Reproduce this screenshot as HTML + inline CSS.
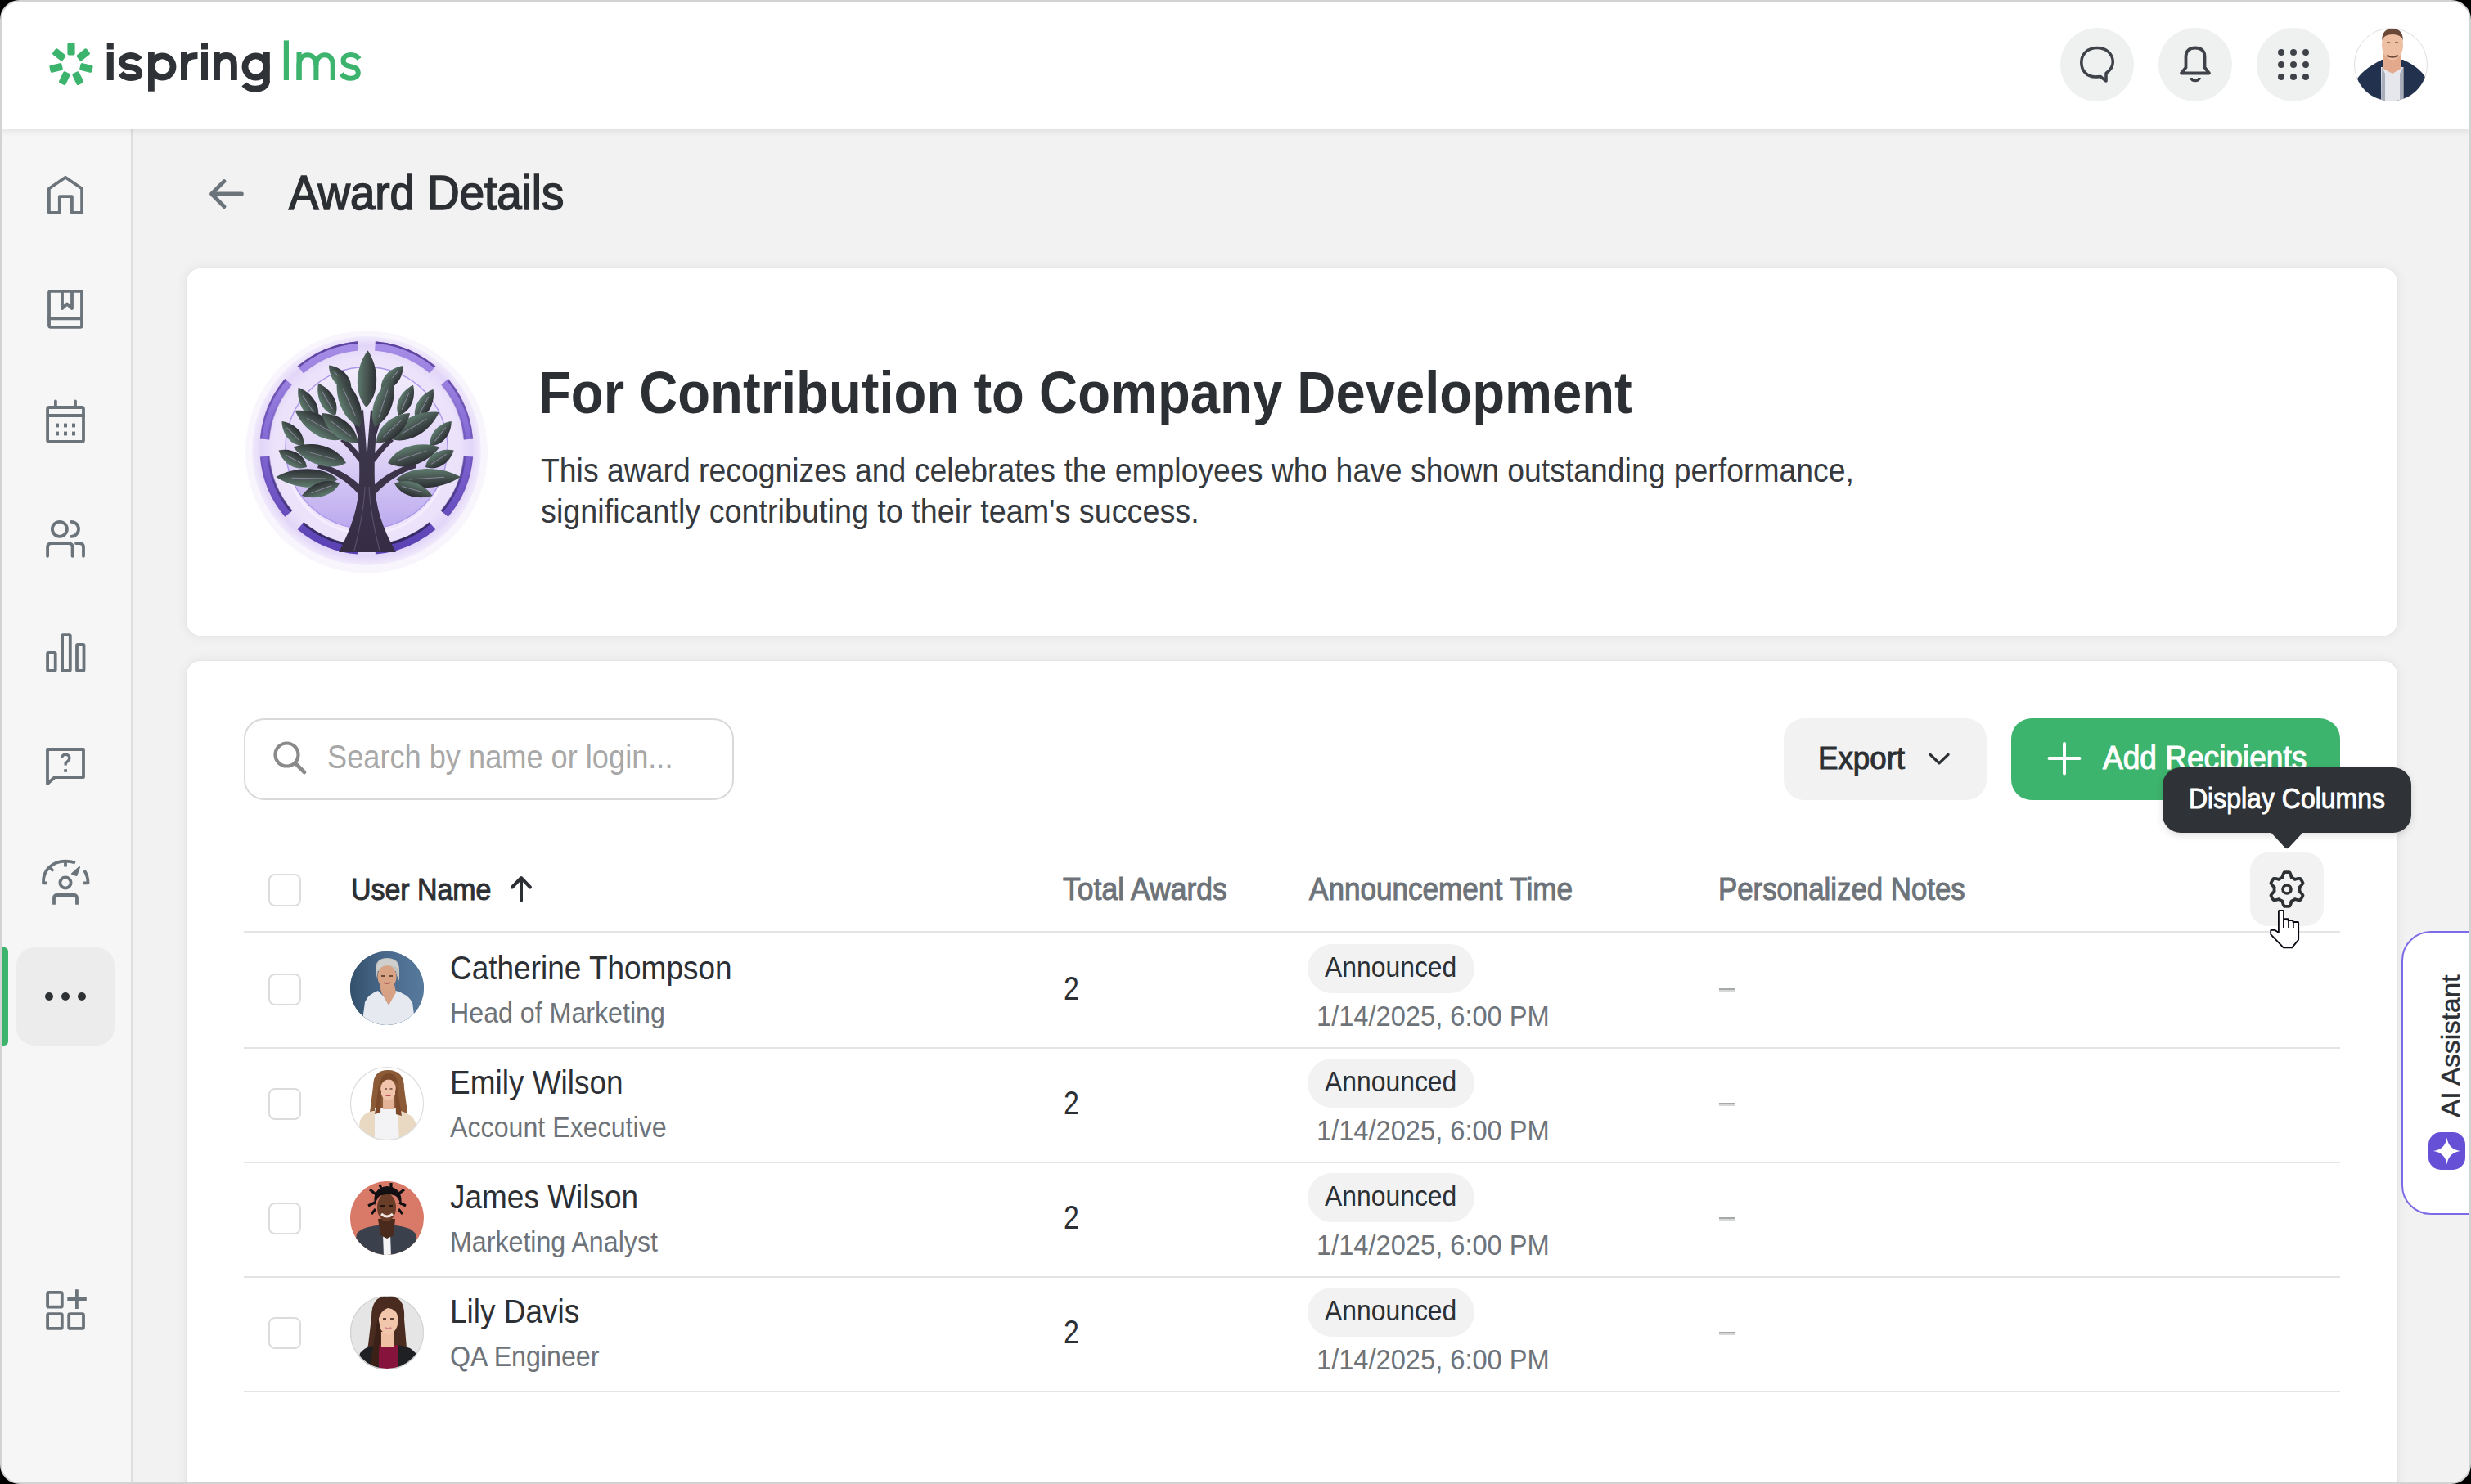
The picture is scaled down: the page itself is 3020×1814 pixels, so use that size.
<!DOCTYPE html><html><head><meta charset="utf-8"><style>
*{margin:0;padding:0;box-sizing:border-box}
html,body{width:3020px;height:1814px;background:#000;overflow:hidden}
body{font-family:"Liberation Sans",sans-serif;position:relative}
.frame{position:absolute;left:0;top:0;width:3020px;height:1814px;border:2px solid #d3d3d3;border-radius:24px;overflow:hidden;background:#f2f2f2}
.w{position:absolute;left:-2px;top:-2px;width:3020px;height:1814px}
.abs{position:absolute}
.t{position:absolute;white-space:nowrap;line-height:1.1172}
svg{position:absolute;overflow:visible}
</style></head><body><div class="frame"><div class="w">
<div class="abs" style="left:0;top:0;width:3020px;height:158px;background:#fff;box-shadow:0 2px 9px rgba(0,0,0,0.09);z-index:2"></div>
<div class="abs" style="left:0;top:0;width:3020px;height:158px;z-index:3">
<svg style="left:0;top:0" width="1" height="1"><g transform="translate(87,78.7)"><rect x="-4.6" y="-26.65" width="9.2" height="15.5" rx="2" transform="rotate(0.00)" fill="#3db46d"/><rect x="-4.6" y="-26.65" width="9.2" height="15.5" rx="2" transform="rotate(51.43)" fill="#3db46d"/><rect x="-4.6" y="-26.65" width="9.2" height="15.5" rx="2" transform="rotate(102.86)" fill="#3db46d"/><rect x="-4.6" y="-26.65" width="9.2" height="15.5" rx="2" transform="rotate(154.29)" fill="#3db46d"/><rect x="-4.6" y="-26.65" width="9.2" height="15.5" rx="2" transform="rotate(205.71)" fill="#3db46d"/><rect x="-4.6" y="-26.65" width="9.2" height="15.5" rx="2" transform="rotate(257.14)" fill="#3db46d"/><rect x="-4.6" y="-26.65" width="9.2" height="15.5" rx="2" transform="rotate(308.57)" fill="#3db46d"/></g></svg>
<svg style="left:0;top:0" width="1" height="1">
<g fill="#2f3236">
<rect x="130.7" y="64" width="8.1" height="34"/><rect x="130.7" y="52.7" width="8.1" height="7.8"/>
<rect x="181" y="64" width="7.8" height="47.7"/>
<rect x="221" y="64" width="8" height="34"/>
<rect x="246" y="64" width="8" height="34"/><rect x="246" y="52.7" width="8" height="7.8"/>
<rect x="261" y="64" width="7.8" height="34"/>
<rect x="321.8" y="64" width="8" height="38"/>
</g>
<g fill="none" stroke="#2f3236" stroke-width="7.8">
<path d="M170.5 73 C168 69.5 164 68 159.5 68 C153.5 68 149.2 70.8 149.2 75.5 C149.2 80 153 81.3 159.5 82.2 C166 83 170.2 85 170.2 89.8 C170.2 93.5 166 95 159.5 95 C154.5 95 150.5 93 147.8 89.5"/>
<circle cx="198.4" cy="81.4" r="13.1"/>
<path d="M225 82 C225 73 230 68 241.5 68"/>
<path d="M264.9 98 V81 C264.9 73 269.5 68 276.5 68 C283 68 285.9 72 285.9 80 V98"/>
<circle cx="312.6" cy="81.4" r="13.1"/>
<path d="M325.8 99 C325.8 105.5 320.5 108.6 312.3 108.6 C306 108.6 301.5 106.8 298.5 102.8"/>
</g>
<g fill="#3db46d"><rect x="346.8" y="49.4" width="6.2" height="48.6"/><rect x="362.5" y="64" width="6.1" height="34"/></g>
<g fill="none" stroke="#3db46d" stroke-width="6.1">
<path d="M365.5 98 V80 C365.5 72.5 369.5 67.2 376 67.2 C382.5 67.2 386.4 72 386.4 80 V98"/>
<path d="M386.4 80 C386.4 72.5 390.5 67.2 397 67.2 C403.5 67.2 406.8 72 406.8 80 V98"/>
<path d="M439 72 C436.5 68.5 433 67 428.5 67 C423 67 419.5 69.7 419.5 74.5 C419.5 79 423.5 80.3 428.8 81.2 C434.5 82 437.8 84 437.8 89 C437.8 93.5 434 95.8 428.5 95.8 C424 95.8 420 94 417.3 90"/>
</g></svg>
<div class="abs" style="left:2518px;top:34px;width:90px;height:90px;border-radius:50%;background:#eff1f1"></div>
<div class="abs" style="left:2638px;top:34px;width:90px;height:90px;border-radius:50%;background:#eff1f1"></div>
<div class="abs" style="left:2758px;top:34px;width:90px;height:90px;border-radius:50%;background:#eff1f1"></div>
<svg style="left:2523px;top:39px" width="80" height="80" viewBox="0 0 80 80"><path d="M44 54.5 C41.5 54.8 39.5 55 38 55 C27 55 20.8 47 20.8 37.5 C20.8 27 28.5 19.5 40 19.5 C51.5 19.5 59.3 27 59.3 37 C59.3 42.5 56 47 51 50.5 L51 60 Z" fill="none" stroke="#3f4349" stroke-width="3.6" stroke-linejoin="round"/></svg>
<svg style="left:2643px;top:39px" width="80" height="80" viewBox="0 0 80 80"><path d="M23 50.5 L28.5 43.5 V30 C28.5 23 33 19.5 40 19.5 C47 19.5 51.5 23 51.5 30 V43.5 L57 50.5 Z" fill="none" stroke="#3f4349" stroke-width="3.8" stroke-linejoin="round"/><path d="M35 56 C35 60.5 45 60.5 45 56" fill="none" stroke="#3f4349" stroke-width="3.8"/></svg>
<svg style="left:2763px;top:39px" width="80" height="80" viewBox="0 0 80 80"><rect x="21" y="21" width="8" height="8" rx="4" fill="#3f4349"/><rect x="36" y="21" width="8" height="8" rx="4" fill="#3f4349"/><rect x="51" y="21" width="8" height="8" rx="4" fill="#3f4349"/><rect x="21" y="36" width="8" height="8" rx="4" fill="#3f4349"/><rect x="36" y="36" width="8" height="8" rx="4" fill="#3f4349"/><rect x="51" y="36" width="8" height="8" rx="4" fill="#3f4349"/><rect x="21" y="51" width="8" height="8" rx="4" fill="#3f4349"/><rect x="36" y="51" width="8" height="8" rx="4" fill="#3f4349"/><rect x="51" y="51" width="8" height="8" rx="4" fill="#3f4349"/></svg>
<svg style="left:2877px;top:34px" width="90" height="90" viewBox="0 0 90 90">
<defs><clipPath id="cav"><circle cx="45" cy="45" r="44.5"/></clipPath></defs>
<circle cx="45" cy="45" r="44.5" fill="#fff" stroke="#dedede" stroke-width="1"/>
<g clip-path="url(#cav)">
<path d="M2 66 Q8 52 34 39 L60 39 Q84 50 90 66 L90 95 L2 95 Z" fill="#22314d"/>
<rect x="33" y="48" width="27.5" height="50" fill="#e6e7ec"/>
<path d="M34 48 L38 56 L38 95 L33 95 Z M60 48 L56 56 L56 95 L60.5 95 Z" fill="#7e8899" opacity="0.6"/>
<path d="M36 30 L57 30 L57 50 L47 56 L36 50 Z" fill="#e3a98d"/>
<ellipse cx="47" cy="21" rx="13" ry="18.5" fill="#efbfa3"/>
<path d="M34 16 Q34 1 47 1 Q60 1 60 16 Q58 8 47 8 Q36 8 34 16 Z" fill="#6a4736"/>
<path d="M40 34 Q47 37 54 34" stroke="#6f4a3a" stroke-width="2.4" fill="none"/>
<path d="M40 18 H44 M50 18 H54" stroke="#7a5a50" stroke-width="1.6"/>
</g></svg>
</div>
<div class="abs" style="left:0;top:158px;width:162px;height:1656px;background:#f6f6f6;border-right:2px solid #dedede;z-index:1"></div>
<svg style="left:40px;top:200px;z-index:2" width="80" height="80" viewBox="0 0 80 80"><path d="M19.9 59.8 V30.5 L40 16.8 L60.1 30.5 V59.8 H47.9 V40.2 H32.8 V59.8 Z" fill="none" stroke="#6b737b" stroke-width="3.8" stroke-linejoin="round" stroke-linecap="round"/></svg>
<svg style="left:40px;top:337px;z-index:2" width="80" height="80" viewBox="0 0 80 80"><rect x="20" y="18.8" width="40" height="44" rx="2" fill="none" stroke="#6b737b" stroke-width="3.8" stroke-linejoin="round" stroke-linecap="round"/><path d="M20 52.4 H60" fill="none" stroke="#6b737b" stroke-width="3.8" stroke-linejoin="round" stroke-linecap="round"/><path d="M36 18.8 V40 L42 34.5 L48 40 V18.8" fill="none" stroke="#6b737b" stroke-width="3.8" stroke-linejoin="round" stroke-linecap="round"/></svg>
<svg style="left:40px;top:476px;z-index:2" width="80" height="80" viewBox="0 0 80 80"><rect x="18.1" y="22" width="43.9" height="42" rx="2" fill="none" stroke="#6b737b" stroke-width="3.8" stroke-linejoin="round" stroke-linecap="round"/><path d="M18.1 32 H62 M27.9 14.3 V22 M52 14.3 V22" fill="none" stroke="#6b737b" stroke-width="3.8" stroke-linejoin="round" stroke-linecap="round"/><rect x="28" y="41.6" width="4" height="4.8" fill="#6b737b"/><rect x="38" y="41.6" width="4" height="4.8" fill="#6b737b"/><rect x="48" y="41.6" width="4" height="4.8" fill="#6b737b"/><rect x="28" y="51.6" width="4" height="4.8" fill="#6b737b"/><rect x="38" y="51.6" width="4" height="4.8" fill="#6b737b"/><rect x="48" y="51.6" width="4" height="4.8" fill="#6b737b"/></svg>
<svg style="left:40px;top:617px;z-index:2" width="80" height="80" viewBox="0 0 80 80"><circle cx="32.9" cy="29.8" r="9" fill="none" stroke="#6b737b" stroke-width="3.8" stroke-linejoin="round" stroke-linecap="round"/><path d="M47 20.8 A9 9 0 0 1 47 38.8" fill="none" stroke="#6b737b" stroke-width="3.8" stroke-linejoin="round" stroke-linecap="round"/><path d="M18.1 62.8 V52 Q18.1 47.1 23 47.1 H43.7 Q48.6 47.1 48.6 52 V62.8" fill="none" stroke="#6b737b" stroke-width="3.8" stroke-linejoin="round" stroke-linecap="round"/><path d="M53 47.1 H57 Q62 47.1 62 52 V62.8" fill="none" stroke="#6b737b" stroke-width="3.8" stroke-linejoin="round" stroke-linecap="round"/></svg>
<svg style="left:40px;top:760px;z-index:2" width="80" height="80" viewBox="0 0 80 80"><rect x="18.1" y="38" width="9.6" height="21.8" rx="1" fill="none" stroke="#6b737b" stroke-width="3.8" stroke-linejoin="round" stroke-linecap="round"/><rect x="36.1" y="16.2" width="9.7" height="43.6" rx="1" fill="none" stroke="#6b737b" stroke-width="3.8" stroke-linejoin="round" stroke-linecap="round"/><rect x="54" y="28" width="8.5" height="31.8" rx="1" fill="none" stroke="#6b737b" stroke-width="3.8" stroke-linejoin="round" stroke-linecap="round"/></svg>
<svg style="left:40px;top:896px;z-index:2" width="80" height="80" viewBox="0 0 80 80"><path d="M18 62 V20 H62 V54 H27 Z" fill="none" stroke="#6b737b" stroke-width="3.8" stroke-linejoin="round" stroke-linecap="round"/><path d="M35.5 31 C35.5 27.5 38 26.2 40.2 26.2 C43 26.2 45 28 45 30.8 C45 33.5 42.5 34.5 40.2 37 V39.5" fill="none" stroke="#6b737b" stroke-width="3.4" stroke-linejoin="miter" stroke-linecap="butt"/><rect x="38.2" y="44.2" width="3.8" height="3.6" fill="#6b737b"/></svg>
<svg style="left:40px;top:1036px;z-index:2" width="80" height="80" viewBox="0 0 80 80"><path d="M17.5 43.3 H13 C12 28 24 16.6 40 16.6 C45 16.6 49 17.5 52 18.5" fill="none" stroke="#6b737b" stroke-width="3.8" stroke-linejoin="round" stroke-linecap="butt"/><path d="M40 17 V23.5" fill="none" stroke="#6b737b" stroke-width="3.8" stroke-linejoin="round" stroke-linecap="butt"/><path d="M24 27.5 L22 25.5" fill="none" stroke="#6b737b" stroke-width="3.8" stroke-linejoin="round" stroke-linecap="round"/><path d="M63 28 C66 32.5 67.5 38 67.5 43.3 H61" fill="none" stroke="#6b737b" stroke-width="3.8" stroke-linejoin="round" stroke-linecap="butt"/><path d="M48 32 L57 24 L53.5 34 Z" fill="#6b737b" stroke="#6b737b" stroke-width="2" stroke-linejoin="round"/><circle cx="40" cy="43" r="6.6" fill="none" stroke="#6b737b" stroke-width="3.8" stroke-linejoin="round" stroke-linecap="round"/><path d="M26 69.8 V62 Q26 58 30 58 H50 Q54 58 54 62 V69.8" fill="none" stroke="#6b737b" stroke-width="3.8" stroke-linejoin="round" stroke-linecap="butt"/></svg>
<div class="abs" style="left:2px;top:1158px;width:8px;height:120px;background:#3db46d;border-radius:0 5px 5px 0;z-index:2"></div>
<div class="abs" style="left:20px;top:1158px;width:120px;height:120px;background:#ececec;border-radius:22px;z-index:2"></div>
<div class="abs" style="left:54.8px;top:1212.6px;width:10px;height:10px;border-radius:50%;background:#2e3134;z-index:3"></div>
<div class="abs" style="left:74.8px;top:1212.6px;width:10px;height:10px;border-radius:50%;background:#2e3134;z-index:3"></div>
<div class="abs" style="left:94.7px;top:1212.6px;width:10px;height:10px;border-radius:50%;background:#2e3134;z-index:3"></div>
<svg style="left:40px;top:1560px;z-index:2" width="80" height="80" viewBox="0 0 80 80"><rect x="18.1" y="19.9" width="17.7" height="17.8" rx="1.5" fill="none" stroke="#6b737b" stroke-width="3.8" stroke-linejoin="round" stroke-linecap="round"/><rect x="18.1" y="46.1" width="17.7" height="17.8" rx="1.5" fill="none" stroke="#6b737b" stroke-width="3.8" stroke-linejoin="round" stroke-linecap="round"/><rect x="44.2" y="46.1" width="17.8" height="17.8" rx="1.5" fill="none" stroke="#6b737b" stroke-width="3.8" stroke-linejoin="round" stroke-linecap="round"/><path d="M53.9 16.2 V39.9 M42.3 28 H65.8" fill="none" stroke="#6b737b" stroke-width="3.8" stroke-linejoin="round" stroke-linecap="butt"/></svg>
<svg style="left:240px;top:200px" width="80" height="80" viewBox="0 0 80 80"><path d="M55.5 37 H18.5 M34 21.5 L18.5 37 L34 52.5" fill="none" stroke="#6b737b" stroke-width="4.8" stroke-linecap="round" stroke-linejoin="round"/></svg>
<div class="t" style="left:353.2px;top:202.5px;font-size:58.87px;-webkit-text-stroke:1.65px #2c2f33;color:#2c2f33;transform:scaleX(0.9289);transform-origin:0 0;">Award Details</div>
<div class="abs" style="left:228px;top:328px;width:2702px;height:449px;background:#fff;border-radius:17px;box-shadow:0 0 3px rgba(0,0,0,0.05),0 0 15px rgba(0,0,0,0.07)"></div>
<div class="t" style="left:658.0px;top:440.4px;font-size:72.09px;font-weight:700;color:#2c2f33;transform:scaleX(0.9047);transform-origin:0 0;">For Contribution to Company Development</div>
<div class="t" style="left:661.0px;top:553.0px;font-size:40.99px;color:#363a3e;transform:scaleX(0.9113);transform-origin:0 0;">This award recognizes and celebrates the employees who have shown outstanding performance,</div>
<div class="t" style="left:661.0px;top:602.6px;font-size:40.99px;color:#363a3e;transform:scaleX(0.9213);transform-origin:0 0;">significantly contributing to their team's success.</div>
<div class="abs" style="left:228px;top:808px;width:2702px;height:1100px;background:#fff;border-radius:17px;box-shadow:0 0 3px rgba(0,0,0,0.05),0 0 15px rgba(0,0,0,0.07)"></div>
<div class="abs" style="left:298px;top:878px;width:599px;height:100px;border:2px solid #d9d9d9;border-radius:25px;background:#fff"></div>
<svg style="left:320px;top:892px" width="70" height="70" viewBox="0 0 70 70"><circle cx="30.5" cy="30.5" r="14" fill="none" stroke="#8a8a8a" stroke-width="4.2"/><path d="M41 41 L52 52" stroke="#8a8a8a" stroke-width="4.6" stroke-linecap="round"/></svg>
<div class="t" style="left:400.0px;top:903.1px;font-size:39.97px;color:#a8a8a8;transform:scaleX(0.9055);transform-origin:0 0;">Search by name or login...</div>
<div class="abs" style="left:2180px;top:878px;width:248px;height:100px;background:#f2f2f2;border-radius:25px"></div>
<div class="t" style="left:2222.1px;top:903.9px;font-size:39.53px;-webkit-text-stroke:1.11px #2c2f33;color:#2c2f33;transform:scaleX(0.9286);transform-origin:0 0;">Export</div>
<svg style="left:2350px;top:910px" width="40" height="40" viewBox="0 0 40 40"><path d="M9 13 L20 24 L31 13" fill="none" stroke="#2c2f33" stroke-width="3.4" stroke-linecap="round" stroke-linejoin="round" transform="translate(0,0) scale(1,0.95)"/></svg>
<div class="abs" style="left:2458px;top:878px;width:402px;height:100px;background:#3db46d;border-radius:25px"></div>
<svg style="left:2490px;top:895px" width="70" height="70" viewBox="0 0 70 70"><path d="M33 14 V50.5 M14.5 32 H51.5" stroke="#fff" stroke-width="4" stroke-linecap="round"/></svg>
<div class="t" style="left:2570.2px;top:903.8px;font-size:39.97px;-webkit-text-stroke:1.12px #fff;color:#fff;transform:scaleX(0.9272);transform-origin:0 0;">Add Recipients</div>
<div class="abs" style="left:328px;top:1068px;width:39.5px;height:39.5px;border:2px solid #dcdcdc;border-radius:8px;background:#fff"></div>
<div class="t" style="left:429.3px;top:1066.5px;font-size:36.77px;-webkit-text-stroke:1.03px #2c2f33;color:#2c2f33;transform:scaleX(0.9215);transform-origin:0 0;">User Name</div>
<svg style="left:610px;top:1060px" width="50" height="50" viewBox="0 0 50 50"><path d="M27 14 V41 M16 24.5 L27 13 L38 24.5" fill="none" stroke="#2c2f33" stroke-width="4" stroke-linecap="round" stroke-linejoin="round"/></svg>
<div class="t" style="left:1299.3px;top:1065.5px;font-size:38.08px;-webkit-text-stroke:1.07px #6d7379;color:#6d7379;transform:scaleX(0.9328);transform-origin:0 0;">Total Awards</div>
<div class="t" style="left:1599.7px;top:1065.5px;font-size:38.08px;-webkit-text-stroke:1.07px #6d7379;color:#6d7379;transform:scaleX(0.9220);transform-origin:0 0;">Announcement Time</div>
<div class="t" style="left:2099.7px;top:1065.5px;font-size:38.08px;-webkit-text-stroke:1.07px #6d7379;color:#6d7379;transform:scaleX(0.9138);transform-origin:0 0;">Personalized Notes</div>
<div class="abs" style="left:2750px;top:1042px;width:90px;height:90px;background:#f2f2f2;border-radius:22px"></div>
<svg style="left:2750px;top:1042px" width="90" height="90" viewBox="0 0 90 90"><path d="M60.50 45.00 L60.50 45.27 L60.49 45.54 L60.48 45.81 L60.46 46.08 L60.44 46.35 L60.42 46.62 L60.38 46.89 L60.35 47.16 L60.31 47.43 L60.66 47.76 L61.03 48.12 L61.41 48.49 L61.80 48.88 L62.19 49.29 L62.58 49.71 L62.96 50.15 L63.32 50.60 L63.66 51.06 L63.97 51.53 L64.26 52.01 L64.51 52.49 L64.38 52.83 L64.24 53.17 L64.09 53.50 L63.94 53.83 L63.78 54.16 L63.62 54.49 L63.45 54.81 L63.28 55.13 L63.10 55.45 L62.91 55.76 L62.72 56.08 L62.53 56.38 L62.33 56.69 L62.12 56.99 L61.91 57.28 L61.69 57.58 L61.47 57.87 L61.24 58.15 L60.70 58.17 L60.14 58.17 L59.58 58.13 L59.01 58.06 L58.44 57.98 L57.87 57.87 L57.31 57.75 L56.76 57.61 L56.23 57.47 L55.72 57.33 L55.22 57.18 L54.76 57.05 L54.54 57.21 L54.33 57.38 L54.11 57.54 L53.89 57.70 L53.67 57.85 L53.44 58.00 L53.21 58.14 L52.98 58.29 L52.75 58.42 L52.51 58.56 L52.28 58.69 L52.04 58.81 L51.79 58.93 L51.55 59.05 L51.30 59.16 L51.06 59.27 L50.81 59.37 L50.56 59.47 L50.44 59.95 L50.32 60.44 L50.19 60.96 L50.04 61.49 L49.88 62.03 L49.71 62.58 L49.52 63.12 L49.31 63.66 L49.08 64.19 L48.83 64.70 L48.56 65.18 L48.27 65.64 L47.91 65.70 L47.55 65.74 L47.18 65.79 L46.82 65.82 L46.46 65.85 L46.09 65.87 L45.73 65.89 L45.36 65.90 L45.00 65.90 L44.64 65.90 L44.27 65.89 L43.91 65.87 L43.54 65.85 L43.18 65.82 L42.82 65.79 L42.45 65.74 L42.09 65.70 L41.73 65.64 L41.44 65.18 L41.17 64.70 L40.92 64.19 L40.69 63.66 L40.48 63.12 L40.29 62.58 L40.12 62.03 L39.96 61.49 L39.81 60.96 L39.68 60.44 L39.56 59.95 L39.44 59.47 L39.19 59.37 L38.94 59.27 L38.70 59.16 L38.45 59.05 L38.21 58.93 L37.96 58.81 L37.72 58.69 L37.49 58.56 L37.25 58.42 L37.02 58.29 L36.79 58.14 L36.56 58.00 L36.33 57.85 L36.11 57.70 L35.89 57.54 L35.67 57.38 L35.46 57.21 L35.24 57.05 L34.78 57.18 L34.28 57.33 L33.77 57.47 L33.24 57.61 L32.69 57.75 L32.13 57.87 L31.56 57.98 L30.99 58.06 L30.42 58.13 L29.86 58.17 L29.30 58.17 L28.76 58.15 L28.53 57.87 L28.31 57.58 L28.09 57.28 L27.88 56.99 L27.67 56.69 L27.47 56.38 L27.28 56.08 L27.09 55.76 L26.90 55.45 L26.72 55.13 L26.55 54.81 L26.38 54.49 L26.22 54.16 L26.06 53.83 L25.91 53.50 L25.76 53.17 L25.62 52.83 L25.49 52.49 L25.74 52.01 L26.03 51.53 L26.34 51.06 L26.68 50.60 L27.04 50.15 L27.42 49.71 L27.81 49.29 L28.20 48.88 L28.59 48.49 L28.97 48.12 L29.34 47.76 L29.69 47.43 L29.65 47.16 L29.62 46.89 L29.58 46.62 L29.56 46.35 L29.54 46.08 L29.52 45.81 L29.51 45.54 L29.50 45.27 L29.50 45.00 L29.50 44.73 L29.51 44.46 L29.52 44.19 L29.54 43.92 L29.56 43.65 L29.58 43.38 L29.62 43.11 L29.65 42.84 L29.69 42.57 L29.34 42.24 L28.97 41.88 L28.59 41.51 L28.20 41.12 L27.81 40.71 L27.42 40.29 L27.04 39.85 L26.68 39.40 L26.34 38.94 L26.03 38.47 L25.74 37.99 L25.49 37.51 L25.62 37.17 L25.76 36.83 L25.91 36.50 L26.06 36.17 L26.22 35.84 L26.38 35.51 L26.55 35.19 L26.72 34.87 L26.90 34.55 L27.09 34.24 L27.28 33.92 L27.47 33.62 L27.67 33.31 L27.88 33.01 L28.09 32.72 L28.31 32.42 L28.53 32.13 L28.76 31.85 L29.30 31.83 L29.86 31.83 L30.42 31.87 L30.99 31.94 L31.56 32.02 L32.13 32.13 L32.69 32.25 L33.24 32.39 L33.77 32.53 L34.28 32.67 L34.78 32.82 L35.24 32.95 L35.46 32.79 L35.67 32.62 L35.89 32.46 L36.11 32.30 L36.33 32.15 L36.56 32.00 L36.79 31.86 L37.02 31.71 L37.25 31.58 L37.49 31.44 L37.72 31.31 L37.96 31.19 L38.21 31.07 L38.45 30.95 L38.70 30.84 L38.94 30.73 L39.19 30.63 L39.44 30.53 L39.56 30.05 L39.68 29.56 L39.81 29.04 L39.96 28.51 L40.12 27.97 L40.29 27.42 L40.48 26.88 L40.69 26.34 L40.92 25.81 L41.17 25.30 L41.44 24.82 L41.73 24.36 L42.09 24.30 L42.45 24.26 L42.82 24.21 L43.18 24.18 L43.54 24.15 L43.91 24.13 L44.27 24.11 L44.64 24.10 L45.00 24.10 L45.36 24.10 L45.73 24.11 L46.09 24.13 L46.46 24.15 L46.82 24.18 L47.18 24.21 L47.55 24.26 L47.91 24.30 L48.27 24.36 L48.56 24.82 L48.83 25.30 L49.08 25.81 L49.31 26.34 L49.52 26.88 L49.71 27.42 L49.88 27.97 L50.04 28.51 L50.19 29.04 L50.32 29.56 L50.44 30.05 L50.56 30.53 L50.81 30.63 L51.06 30.73 L51.30 30.84 L51.55 30.95 L51.79 31.07 L52.04 31.19 L52.28 31.31 L52.51 31.44 L52.75 31.58 L52.98 31.71 L53.21 31.86 L53.44 32.00 L53.67 32.15 L53.89 32.30 L54.11 32.46 L54.33 32.62 L54.54 32.79 L54.76 32.95 L55.22 32.82 L55.72 32.67 L56.23 32.53 L56.76 32.39 L57.31 32.25 L57.87 32.13 L58.44 32.02 L59.01 31.94 L59.58 31.87 L60.14 31.83 L60.70 31.83 L61.24 31.85 L61.47 32.13 L61.69 32.42 L61.91 32.72 L62.12 33.01 L62.33 33.31 L62.53 33.62 L62.72 33.92 L62.91 34.24 L63.10 34.55 L63.28 34.87 L63.45 35.19 L63.62 35.51 L63.78 35.84 L63.94 36.17 L64.09 36.50 L64.24 36.83 L64.38 37.17 L64.51 37.51 L64.26 37.99 L63.97 38.47 L63.66 38.94 L63.32 39.40 L62.96 39.85 L62.58 40.29 L62.19 40.71 L61.80 41.12 L61.41 41.51 L61.03 41.88 L60.66 42.24 L60.31 42.57 L60.35 42.84 L60.38 43.11 L60.42 43.38 L60.44 43.65 L60.46 43.92 L60.48 44.19 L60.49 44.46 L60.50 44.73 Z" fill="none" stroke="#2e3134" stroke-width="3.8" stroke-linejoin="round"/><circle cx="45" cy="45" r="5" fill="none" stroke="#2e3134" stroke-width="3.6"/></svg>
<div class="abs" style="left:298px;top:1138px;width:2562px;height:2px;background:#e4e4e4"></div>
<div class="abs" style="left:328px;top:1189.5px;width:39.5px;height:39.5px;border:2px solid #dcdcdc;border-radius:8px;background:#fff"></div>
<div class="t" style="left:550.0px;top:1161.2px;font-size:39.97px;color:#2c2f33;transform:scaleX(0.9250);transform-origin:0 0;">Catherine Thompson</div>
<div class="t" style="left:550.0px;top:1218.7px;font-size:34.59px;color:#6d7379;transform:scaleX(0.9304);transform-origin:0 0;">Head of Marketing</div>
<div class="t" style="left:1299.6px;top:1185.1px;font-size:41.42px;color:#2c2f33;transform:scaleX(0.8206);transform-origin:0 0;">2</div>
<div class="abs" style="left:1598px;top:1153.5px;width:204px;height:60.5px;background:#f2f2f2;border-radius:30px"></div>
<div class="t" style="left:1619.0px;top:1162.5px;font-size:34.88px;color:#2c2f33;transform:scaleX(0.9138);transform-origin:0 0;">Announced</div>
<div class="t" style="left:1609.4px;top:1222.7px;font-size:34.59px;color:#6d7379;transform:scaleX(0.9435);transform-origin:0 0;">1/14/2025, 6:00 PM</div>
<div class="abs" style="left:2100.5px;top:1207.9px;width:19.5px;height:4px;background:linear-gradient(#a6a8aa 50%,#d6d8d8 50%)"></div>
<div class="abs" style="left:298px;top:1280px;width:2562px;height:2px;background:#e4e4e4"></div>
<div class="abs" style="left:328px;top:1329.5px;width:39.5px;height:39.5px;border:2px solid #dcdcdc;border-radius:8px;background:#fff"></div>
<div class="t" style="left:550.0px;top:1301.2px;font-size:39.97px;color:#2c2f33;transform:scaleX(0.9250);transform-origin:0 0;">Emily Wilson</div>
<div class="t" style="left:550.0px;top:1358.7px;font-size:34.59px;color:#6d7379;transform:scaleX(0.9304);transform-origin:0 0;">Account Executive</div>
<div class="t" style="left:1299.6px;top:1325.1px;font-size:41.42px;color:#2c2f33;transform:scaleX(0.8206);transform-origin:0 0;">2</div>
<div class="abs" style="left:1598px;top:1293.5px;width:204px;height:60.5px;background:#f2f2f2;border-radius:30px"></div>
<div class="t" style="left:1619.0px;top:1302.5px;font-size:34.88px;color:#2c2f33;transform:scaleX(0.9138);transform-origin:0 0;">Announced</div>
<div class="t" style="left:1609.4px;top:1362.7px;font-size:34.59px;color:#6d7379;transform:scaleX(0.9435);transform-origin:0 0;">1/14/2025, 6:00 PM</div>
<div class="abs" style="left:2100.5px;top:1347.9px;width:19.5px;height:4px;background:linear-gradient(#a6a8aa 50%,#d6d8d8 50%)"></div>
<div class="abs" style="left:298px;top:1420px;width:2562px;height:2px;background:#e4e4e4"></div>
<div class="abs" style="left:328px;top:1469.5px;width:39.5px;height:39.5px;border:2px solid #dcdcdc;border-radius:8px;background:#fff"></div>
<div class="t" style="left:550.0px;top:1441.2px;font-size:39.97px;color:#2c2f33;transform:scaleX(0.9250);transform-origin:0 0;">James Wilson</div>
<div class="t" style="left:550.0px;top:1498.7px;font-size:34.59px;color:#6d7379;transform:scaleX(0.9304);transform-origin:0 0;">Marketing Analyst</div>
<div class="t" style="left:1299.6px;top:1465.1px;font-size:41.42px;color:#2c2f33;transform:scaleX(0.8206);transform-origin:0 0;">2</div>
<div class="abs" style="left:1598px;top:1433.5px;width:204px;height:60.5px;background:#f2f2f2;border-radius:30px"></div>
<div class="t" style="left:1619.0px;top:1442.5px;font-size:34.88px;color:#2c2f33;transform:scaleX(0.9138);transform-origin:0 0;">Announced</div>
<div class="t" style="left:1609.4px;top:1502.7px;font-size:34.59px;color:#6d7379;transform:scaleX(0.9435);transform-origin:0 0;">1/14/2025, 6:00 PM</div>
<div class="abs" style="left:2100.5px;top:1487.9px;width:19.5px;height:4px;background:linear-gradient(#a6a8aa 50%,#d6d8d8 50%)"></div>
<div class="abs" style="left:298px;top:1560px;width:2562px;height:2px;background:#e4e4e4"></div>
<div class="abs" style="left:328px;top:1609.5px;width:39.5px;height:39.5px;border:2px solid #dcdcdc;border-radius:8px;background:#fff"></div>
<div class="t" style="left:550.0px;top:1581.2px;font-size:39.97px;color:#2c2f33;transform:scaleX(0.9250);transform-origin:0 0;">Lily Davis</div>
<div class="t" style="left:550.0px;top:1638.7px;font-size:34.59px;color:#6d7379;transform:scaleX(0.9304);transform-origin:0 0;">QA Engineer</div>
<div class="t" style="left:1299.6px;top:1605.1px;font-size:41.42px;color:#2c2f33;transform:scaleX(0.8206);transform-origin:0 0;">2</div>
<div class="abs" style="left:1598px;top:1573.5px;width:204px;height:60.5px;background:#f2f2f2;border-radius:30px"></div>
<div class="t" style="left:1619.0px;top:1582.5px;font-size:34.88px;color:#2c2f33;transform:scaleX(0.9138);transform-origin:0 0;">Announced</div>
<div class="t" style="left:1609.4px;top:1642.7px;font-size:34.59px;color:#6d7379;transform:scaleX(0.9435);transform-origin:0 0;">1/14/2025, 6:00 PM</div>
<div class="abs" style="left:2100.5px;top:1627.9px;width:19.5px;height:4px;background:linear-gradient(#a6a8aa 50%,#d6d8d8 50%)"></div>
<div class="abs" style="left:298px;top:1700px;width:2562px;height:2px;background:#e4e4e4"></div>
<svg style="left:428px;top:1163px" width="90" height="90" viewBox="0 0 90 90"><defs><clipPath id="a1"><circle cx="45" cy="45" r="45"/></clipPath></defs><g clip-path="url(#a1)"><rect width="90" height="90" fill="#4d6d8e"/>
<defs><linearGradient id="cbg" x1="0" y1="0" x2="1" y2="0"><stop offset="0" stop-color="#34506c"/><stop offset="0.5" stop-color="#4a6a8c"/><stop offset="1" stop-color="#577a9c"/></linearGradient></defs>
<rect x="0" y="0" width="90" height="90" fill="url(#cbg)"/>
<path d="M14 92 L18 62 Q22 52 34 48 L44 58 L56 48 Q70 52 76 62 L80 92 Z" fill="#e6eaf0"/>
<path d="M36 40 L54 40 L56 50 L47 66 L38 50 Z" fill="#d6a184"/>
<path d="M31 22 Q31 8 45 8 Q60 8 60 22 L60 36 Q56 28 56 24 L34 24 Q33 30 31 36 Z" fill="#c4c4c2"/>
<ellipse cx="45" cy="31" rx="11.5" ry="14" fill="#d9a385"/>
<path d="M32 22 Q33 9 45 9 Q58 9 59 22 Q56 17 47 17 Q37 17 32 24 Z" fill="#cfcfcd"/>
<path d="M38 30 H42 M48 30 H52" stroke="#6e4a3a" stroke-width="1.8"/>
<path d="M41 38 Q45 40 49 38" stroke="#a95a55" stroke-width="1.8" fill="none"/>
</g></svg>
<svg style="left:428px;top:1304px" width="90" height="90" viewBox="0 0 90 90"><defs><clipPath id="a2"><circle cx="45" cy="45" r="45"/></clipPath></defs><g clip-path="url(#a2)"><rect width="90" height="90" fill="#ffffff"/>
<path d="M28 24 Q28 4 46 4 Q66 4 66 26 L70 56 L24 56 Z" fill="#8b5a36"/>
<path d="M8 92 L12 66 Q16 56 28 54 L62 54 Q76 58 80 68 L84 92 Z" fill="#e9d8c2"/>
<path d="M30 50 L58 50 L60 92 L30 92 Z" fill="#f3f3f5"/>
<rect x="40" y="38" width="13" height="14" fill="#e3b297"/>
<ellipse cx="46.5" cy="28" rx="9.5" ry="13" fill="#efc4aa"/>
<path d="M36 22 Q38 8 47 8 Q57 8 58 22 Q52 14 44 16 Q39 18 36 24 Z" fill="#7a4a2a"/>
<path d="M35 22 L30 58 L37 56 L38 30 Z M57 22 L63 60 L56 58 L55 30 Z" fill="#7c4a2a"/>
<path d="M42 27 H45 M48.5 27 H51.5" stroke="#6b4a3a" stroke-width="1.6"/>
<path d="M43.5 35 H49.5" stroke="#c24e55" stroke-width="2"/>
</g><circle cx="45" cy="45" r="44.5" fill="none" stroke="#dedede" stroke-width="1.2"/></svg>
<svg style="left:428px;top:1444px" width="90" height="90" viewBox="0 0 90 90"><defs><clipPath id="a3"><circle cx="45" cy="45" r="45"/></clipPath></defs><g clip-path="url(#a3)"><rect width="90" height="90" fill="#d97a69"/>
<path d="M4 92 L8 64 Q14 56 34 54 L56 54 Q74 56 80 64 L86 92 Z" fill="#3a414d"/>
<path d="M40 64 L49 64 L50 92 L41 92 Z" fill="#f4f4f4"/>
<path d="M34 46 L55 46 L53 66 L45 70 L37 66 Z" fill="#4a2a1c"/>
<ellipse cx="44.5" cy="32" rx="11.5" ry="17" fill="#6a3d28"/>
<path d="M30 30 Q26 8 45 6 Q66 8 62 30 Q60 22 56 18 Q46 14 36 18 Q32 22 30 30 Z" fill="#121013"/>
<path d="M34 18 L24 10 M40 14 L36 4 M50 14 L50 2 M56 18 L66 10 M30 26 L22 30 M60 26 L68 30 M31 34 L26 40 M59 34 L64 40" stroke="#121013" stroke-width="3.2"/>
<path d="M38 40 Q45 46 52 40" stroke="#f0e6df" stroke-width="3" fill="none"/>
<path d="M37 30 H42 M47 30 H52" stroke="#241410" stroke-width="2"/>
</g></svg>
<svg style="left:428px;top:1584px" width="90" height="90" viewBox="0 0 90 90"><defs><clipPath id="a4"><circle cx="45" cy="45" r="45"/></clipPath></defs><g clip-path="url(#a4)"><rect width="90" height="90" fill="#e5e5e6"/>
<path d="M26 26 Q26 0 46 0 Q68 0 66 28 L70 76 L44 70 L34 92 L14 84 L22 60 Z" fill="#4a2b20"/>
<path d="M8 92 L12 70 Q18 62 34 60 L58 60 Q74 62 80 70 L84 92 Z" fill="#1f2024"/>
<path d="M34 60 L59 60 L58 92 L35 92 Z" fill="#85133b"/>
<rect x="38" y="44" width="15" height="18" fill="#f0c0a4"/>
<ellipse cx="46.5" cy="30" rx="12" ry="17" fill="#f2c6ab"/>
<path d="M34 28 Q34 8 47 8 Q60 8 60 26 Q56 16 46 15 Q38 17 34 30 Z" fill="#4a2b20"/>
<path d="M34 26 L24 86 L34 86 L37 40 Z" fill="#3b2017"/>
<path d="M40 28 H44 M49 28 H53" stroke="#5e4036" stroke-width="1.8"/>
<path d="M42.5 39 Q46.5 41 50.5 39" stroke="#d0868c" stroke-width="2.2" fill="none"/>
</g><circle cx="45" cy="45" r="44.5" fill="none" stroke="#d4d4d4" stroke-width="1.2"/></svg>
<svg style="left:298px;top:405px" width="300" height="300" viewBox="0 0 300 300">
<defs>
<radialGradient id="bgd" cx="50%" cy="50%" r="50%"><stop offset="0" stop-color="#efe7fb"/><stop offset="0.8" stop-color="#ece3fb"/><stop offset="0.92" stop-color="#e2d6f8"/><stop offset="1" stop-color="#f1ebfc"/></radialGradient>
<linearGradient id="inn" x1="0" y1="0" x2="0" y2="1"><stop offset="0" stop-color="#f3edfc"/><stop offset="0.5" stop-color="#e2d7f8"/><stop offset="1" stop-color="#bba9ee"/></linearGradient>
<linearGradient id="rg" gradientUnits="userSpaceOnUse" x1="0" y1="20" x2="0" y2="270"><stop offset="0" stop-color="#a58ce6"/><stop offset="0.5" stop-color="#8066d2"/><stop offset="1" stop-color="#5940b3"/></linearGradient><linearGradient id="ro" gradientUnits="userSpaceOnUse" x1="0" y1="20" x2="0" y2="270"><stop offset="0" stop-color="#5e42a0" stop-opacity="1"/><stop offset="0.55" stop-color="#5e42a0" stop-opacity="0.3"/><stop offset="1" stop-color="#5e42a0" stop-opacity="0"/></linearGradient><linearGradient id="ri" gradientUnits="userSpaceOnUse" x1="0" y1="20" x2="0" y2="270"><stop offset="0" stop-color="#9c84e0" stop-opacity="0"/><stop offset="0.45" stop-color="#4a3590" stop-opacity="0.35"/><stop offset="1" stop-color="#2c2450" stop-opacity="1"/></linearGradient>
<linearGradient id="lf" x1="0" y1="0" x2="0" y2="1"><stop offset="0" stop-color="#5f7c70"/><stop offset="0.5" stop-color="#46544f"/><stop offset="1" stop-color="#2c2e34"/></linearGradient>
<linearGradient id="tk" x1="0" y1="0" x2="0" y2="1"><stop offset="0" stop-color="#3e3a4c"/><stop offset="1" stop-color="#362d45"/></linearGradient>
</defs>
<circle cx="150" cy="147.5" r="148" fill="#f8f5fd"/>
<circle cx="150" cy="146" r="140" fill="url(#bgd)"/>
<path d="M274.6 153.0 A125 125 0 0 1 245.5 223.2" stroke="url(#rg)" stroke-width="11" fill="none"/><path d="M279.0 153.3 A129.5 129.5 0 0 1 248.9 226.1" stroke="url(#ro)" stroke-width="2.6" fill="none"/><path d="M269.9 152.6 A120.3 120.3 0 0 1 241.9 220.1" stroke="url(#ri)" stroke-width="3.2" fill="none"/><path d="M230.7 238.0 A125 125 0 0 1 160.5 267.1" stroke="url(#rg)" stroke-width="11" fill="none"/><path d="M233.6 241.4 A129.5 129.5 0 0 1 160.8 271.5" stroke="url(#ro)" stroke-width="2.6" fill="none"/><path d="M227.6 234.4 A120.3 120.3 0 0 1 160.1 262.4" stroke="url(#ri)" stroke-width="3.2" fill="none"/><path d="M139.5 267.1 A125 125 0 0 1 69.3 238.0" stroke="url(#rg)" stroke-width="11" fill="none"/><path d="M139.2 271.5 A129.5 129.5 0 0 1 66.4 241.4" stroke="url(#ro)" stroke-width="2.6" fill="none"/><path d="M139.9 262.4 A120.3 120.3 0 0 1 72.4 234.4" stroke="url(#ri)" stroke-width="3.2" fill="none"/><path d="M54.5 223.2 A125 125 0 0 1 25.4 153.0" stroke="url(#rg)" stroke-width="11" fill="none"/><path d="M51.1 226.1 A129.5 129.5 0 0 1 21.0 153.3" stroke="url(#ro)" stroke-width="2.6" fill="none"/><path d="M58.1 220.1 A120.3 120.3 0 0 1 30.1 152.6" stroke="url(#ri)" stroke-width="3.2" fill="none"/><path d="M25.4 132.0 A125 125 0 0 1 54.5 61.8" stroke="url(#rg)" stroke-width="11" fill="none"/><path d="M21.0 131.7 A129.5 129.5 0 0 1 51.1 58.9" stroke="url(#ro)" stroke-width="2.6" fill="none"/><path d="M30.1 132.4 A120.3 120.3 0 0 1 58.1 64.9" stroke="url(#ri)" stroke-width="3.2" fill="none"/><path d="M69.3 47.0 A125 125 0 0 1 139.5 17.9" stroke="url(#rg)" stroke-width="11" fill="none"/><path d="M66.4 43.6 A129.5 129.5 0 0 1 139.2 13.5" stroke="url(#ro)" stroke-width="2.6" fill="none"/><path d="M72.4 50.6 A120.3 120.3 0 0 1 139.9 22.6" stroke="url(#ri)" stroke-width="3.2" fill="none"/><path d="M160.5 17.9 A125 125 0 0 1 230.7 47.0" stroke="url(#rg)" stroke-width="11" fill="none"/><path d="M160.8 13.5 A129.5 129.5 0 0 1 233.6 43.6" stroke="url(#ro)" stroke-width="2.6" fill="none"/><path d="M160.1 22.6 A120.3 120.3 0 0 1 227.6 50.6" stroke="url(#ri)" stroke-width="3.2" fill="none"/><path d="M245.5 61.8 A125 125 0 0 1 274.6 132.0" stroke="url(#rg)" stroke-width="11" fill="none"/><path d="M248.9 58.9 A129.5 129.5 0 0 1 279.0 131.7" stroke="url(#ro)" stroke-width="2.6" fill="none"/><path d="M241.9 64.9 A120.3 120.3 0 0 1 269.9 132.4" stroke="url(#ri)" stroke-width="3.2" fill="none"/>
<circle cx="150" cy="142.5" r="99" fill="url(#inn)" stroke="#ab97ea" stroke-width="1.4"/>
<path d="M58 185 A99 99 0 0 0 242 185" stroke="#f4effd" stroke-width="3" fill="none" opacity="0.85"/>
<path d="M116 270 C132 240 140 215 141 185 C142 160 140 130 137 100 L146 96 C148 120 150 140 150.5 160 C151 140 153 120 155 96 L164 100 C161 130 159 160 160 185 C161 215 169 240 186 270 Z" fill="url(#tk)"/><path d="M141 200 C125 182 108 172 90 167 L92 161 C112 166 130 176 144 190 Z M160 200 C176 182 193 172 211 167 L209 161 C189 166 171 176 157 190 Z" fill="#3b3347"/><path d="M141 160 C132 148 125 140 118 134 L122 130 C130 136 138 145 145 154 Z M160 160 C169 148 176 140 183 134 L179 130 C171 136 163 145 156 154 Z" fill="#3b3347"/><path d="M140 130 C136 118 134 110 131 100 L136 98 C139 108 141 116 144 126 Z M161 130 C165 118 167 110 170 100 L165 98 C162 108 160 116 157 126 Z" fill="#3b3347"/><path d="M135 268 C142 240 147 215 148 190 M166 268 C159 240 154 215 153 190" stroke="#5a4f6a" stroke-width="1.2" fill="none"/>
<g transform="translate(149.6 93.0) rotate(-88.4)"><path d="M0 0 C17.5 -16.5 48.9 -14.6 69.8 0 C48.9 14.6 17.5 16.5 0 0 Z" fill="url(#lf)"/><path d="M14.0 0.5 L52.4 -0.5" stroke="#a99cc0" stroke-width="1" opacity="0.7"/></g><g transform="translate(131.0 72.0) rotate(-131.4)"><path d="M0 0 C10.2 -11.9 28.6 -10.6 40.8 0 C28.6 10.6 10.2 11.9 0 0 Z" fill="url(#lf)"/><path d="M8.2 0.5 L30.6 -0.5" stroke="#a99cc0" stroke-width="1" opacity="0.7"/></g><g transform="translate(168.0 72.0) rotate(-48.0)"><path d="M0 0 C10.1 -11.8 28.3 -10.4 40.4 0 C28.3 10.4 10.1 11.8 0 0 Z" fill="url(#lf)"/><path d="M8.1 0.5 L30.3 -0.5" stroke="#a99cc0" stroke-width="1" opacity="0.7"/></g><g transform="translate(141.5 117.0) rotate(-112.7)"><path d="M0 0 C17.2 -16.2 48.1 -14.4 68.7 0 C48.1 14.4 17.2 16.2 0 0 Z" fill="url(#lf)"/><path d="M13.7 0.5 L51.5 -0.5" stroke="#a99cc0" stroke-width="1" opacity="0.7"/></g><g transform="translate(160.0 117.0) rotate(-70.0)"><path d="M0 0 C16.1 -15.2 45.0 -13.5 64.3 0 C45.0 13.5 16.1 15.2 0 0 Z" fill="url(#lf)"/><path d="M12.9 0.5 L48.2 -0.5" stroke="#a99cc0" stroke-width="1" opacity="0.7"/></g><g transform="translate(112.0 103.0) rotate(-118.1)"><path d="M0 0 C11.1 -12.4 31.2 -11.0 44.6 0 C31.2 11.0 11.1 12.4 0 0 Z" fill="url(#lf)"/><path d="M8.9 0.5 L33.4 -0.5" stroke="#a99cc0" stroke-width="1" opacity="0.7"/></g><g transform="translate(189.0 103.0) rotate(-64.2)"><path d="M0 0 C10.4 -11.5 29.0 -10.2 41.4 0 C29.0 10.2 10.4 11.5 0 0 Z" fill="url(#lf)"/><path d="M8.3 0.5 L31.1 -0.5" stroke="#a99cc0" stroke-width="1" opacity="0.7"/></g><g transform="translate(90.0 108.0) rotate(-120.7)"><path d="M0 0 C11.4 -12.7 32.0 -11.3 45.7 0 C32.0 11.3 11.4 12.7 0 0 Z" fill="url(#lf)"/><path d="M9.1 0.5 L34.3 -0.5" stroke="#a99cc0" stroke-width="1" opacity="0.7"/></g><g transform="translate(210.0 108.0) rotate(-60.0)"><path d="M0 0 C10.8 -12.0 30.1 -10.6 43.1 0 C30.1 10.6 10.8 12.0 0 0 Z" fill="url(#lf)"/><path d="M8.6 0.5 L32.3 -0.5" stroke="#a99cc0" stroke-width="1" opacity="0.7"/></g><g transform="translate(121.0 132.0) rotate(-149.0)"><path d="M0 0 C17.0 -17.0 47.6 -15.1 68.0 0 C47.6 15.1 17.0 17.0 0 0 Z" fill="url(#lf)"/><path d="M13.6 0.5 L51.0 -0.5" stroke="#a99cc0" stroke-width="1" opacity="0.7"/></g><g transform="translate(180.0 132.0) rotate(-29.4)"><path d="M0 0 C16.8 -16.8 47.0 -14.9 67.2 0 C47.0 14.9 16.8 16.8 0 0 Z" fill="url(#lf)"/><path d="M13.4 0.5 L50.4 -0.5" stroke="#a99cc0" stroke-width="1" opacity="0.7"/></g><g transform="translate(139.5 136.0) rotate(-141.0)"><path d="M0 0 C14.3 -15.1 40.1 -13.4 57.2 0 C40.1 13.4 14.3 15.1 0 0 Z" fill="url(#lf)"/><path d="M11.4 0.5 L42.9 -0.5" stroke="#a99cc0" stroke-width="1" opacity="0.7"/></g><g transform="translate(162.0 136.0) rotate(-41.3)"><path d="M0 0 C13.6 -14.4 38.2 -12.8 54.6 0 C38.2 12.8 13.6 14.4 0 0 Z" fill="url(#lf)"/><path d="M10.9 0.5 L40.9 -0.5" stroke="#a99cc0" stroke-width="1" opacity="0.7"/></g><g transform="translate(73.0 140.0) rotate(-131.5)"><path d="M0 0 C10.0 -11.7 28.0 -10.4 40.0 0 C28.0 10.4 10.0 11.7 0 0 Z" fill="url(#lf)"/><path d="M8.0 0.5 L30.0 -0.5" stroke="#a99cc0" stroke-width="1" opacity="0.7"/></g><g transform="translate(228.0 140.0) rotate(-49.4)"><path d="M0 0 C9.9 -11.5 27.7 -10.2 39.5 0 C27.7 10.2 9.9 11.5 0 0 Z" fill="url(#lf)"/><path d="M7.9 0.5 L29.6 -0.5" stroke="#a99cc0" stroke-width="1" opacity="0.7"/></g><g transform="translate(125.0 161.0) rotate(-163.2)"><path d="M0 0 C16.8 -16.8 47.1 -14.9 67.3 0 C47.1 14.9 16.8 16.8 0 0 Z" fill="url(#lf)"/><path d="M13.5 0.5 L50.5 -0.5" stroke="#a99cc0" stroke-width="1" opacity="0.7"/></g><g transform="translate(176.0 161.0) rotate(-17.1)"><path d="M0 0 C16.6 -16.6 46.5 -14.7 66.4 0 C46.5 14.7 16.6 16.6 0 0 Z" fill="url(#lf)"/><path d="M13.3 0.5 L49.8 -0.5" stroke="#a99cc0" stroke-width="1" opacity="0.7"/></g><g transform="translate(77.0 166.0) rotate(-149.3)"><path d="M0 0 C10.0 -12.3 28.1 -10.9 40.1 0 C28.1 10.9 10.0 12.3 0 0 Z" fill="url(#lf)"/><path d="M8.0 0.5 L30.1 -0.5" stroke="#a99cc0" stroke-width="1" opacity="0.7"/></g><g transform="translate(222.0 166.0) rotate(-30.6)"><path d="M0 0 C10.1 -12.3 28.2 -10.9 40.3 0 C28.2 10.9 10.1 12.3 0 0 Z" fill="url(#lf)"/><path d="M8.1 0.5 L30.2 -0.5" stroke="#a99cc0" stroke-width="1" opacity="0.7"/></g><g transform="translate(115.0 181.0) rotate(-177.7)"><path d="M0 0 C18.9 -15.8 53.0 -14.0 75.7 0 C53.0 14.0 18.9 15.8 0 0 Z" fill="url(#lf)"/><path d="M15.1 0.5 L56.7 -0.5" stroke="#a99cc0" stroke-width="1" opacity="0.7"/></g><g transform="translate(186.0 181.0) rotate(-2.2)"><path d="M0 0 C19.7 -16.4 55.2 -14.6 78.9 0 C55.2 14.6 19.7 16.4 0 0 Z" fill="url(#lf)"/><path d="M15.8 0.5 L59.1 -0.5" stroke="#a99cc0" stroke-width="1" opacity="0.7"/></g><g transform="translate(117.0 186.0) rotate(162.0)"><path d="M0 0 C12.1 -12.1 34.0 -10.8 48.6 0 C34.0 10.8 12.1 12.1 0 0 Z" fill="url(#lf)"/><path d="M9.7 0.5 L36.4 -0.5" stroke="#a99cc0" stroke-width="1" opacity="0.7"/></g><g transform="translate(184.0 186.0) rotate(17.9)"><path d="M0 0 C12.2 -12.2 34.1 -10.8 48.8 0 C34.1 10.8 12.2 12.2 0 0 Z" fill="url(#lf)"/><path d="M9.8 0.5 L36.6 -0.5" stroke="#a99cc0" stroke-width="1" opacity="0.7"/></g>
</svg>
<div class="abs" style="left:2643px;top:938px;width:304px;height:80px;background:#2f3236;border-radius:22px;z-index:5;box-shadow:0 3px 10px rgba(0,0,0,0.13)"></div>
<svg style="left:2770px;top:1015px;z-index:5" width="50" height="30" viewBox="0 0 50 30"><path d="M4 1 L46 1 L27.5 21 Q25 23.5 22.5 21 Z" fill="#2f3236"/></svg>
<div style="position:absolute;left:0;top:0;z-index:6"><div class="t" style="left:2675.1px;top:956.9px;font-size:34.30px;-webkit-text-stroke:0.96px #fff;color:#fff;transform:scaleX(0.9328);transform-origin:0 0;">Display Columns</div></div>
<svg style="left:2760px;top:1100px;z-index:7" width="70" height="70" viewBox="0 0 70 70">
<path d="M24.9 13.6 Q24.9 12.9 25.6 12.9 H30.4 Q31 12.9 31 13.6 V23.2 H36.4 V25.1 H42.4 V27 H48.5 Q49.2 27 49.2 27.7 V48.6 L41.2 58.4 H30.9 L15.2 42.2 V37.4 L16.2 36.9 H20.6 L24.9 40 Z" fill="#fff" stroke="#080812" stroke-width="1.8" stroke-linejoin="round"/>
<path d="M30.9 23.2 V34 M37 25.1 V34 M42.9 27 V34" stroke="#080812" stroke-width="1.7"/>
</svg>
<div class="abs" style="left:2934.5px;top:1138px;width:100px;height:347px;background:#fff;border:2px solid #7b6be6;border-radius:36px 0 0 36px;z-index:4"></div>
<div class="abs" style="left:2968px;top:1384px;width:45px;height:46px;background:#6650d6;border-radius:15px;z-index:5"></div>
<svg style="left:2968px;top:1384px;z-index:6" width="45" height="46" viewBox="0 0 45 46"><path d="M22.5 6.5 Q24.5 21 39 23 Q24.5 25 22.5 39.5 Q20.5 25 6 23 Q20.5 21 22.5 6.5 Z" fill="#fff"/></svg>
<div style="position:absolute;left:2977.5px;top:1366px;width:0;height:0;z-index:6"><div class="t" style="left:0;top:0;font-size:31.5px;-webkit-text-stroke:0.5px #2c2f33;color:#2c2f33;transform:rotate(-90deg) scaleX(1.06);transform-origin:0 0">AI Assistant</div></div>
</div></div></body></html>
